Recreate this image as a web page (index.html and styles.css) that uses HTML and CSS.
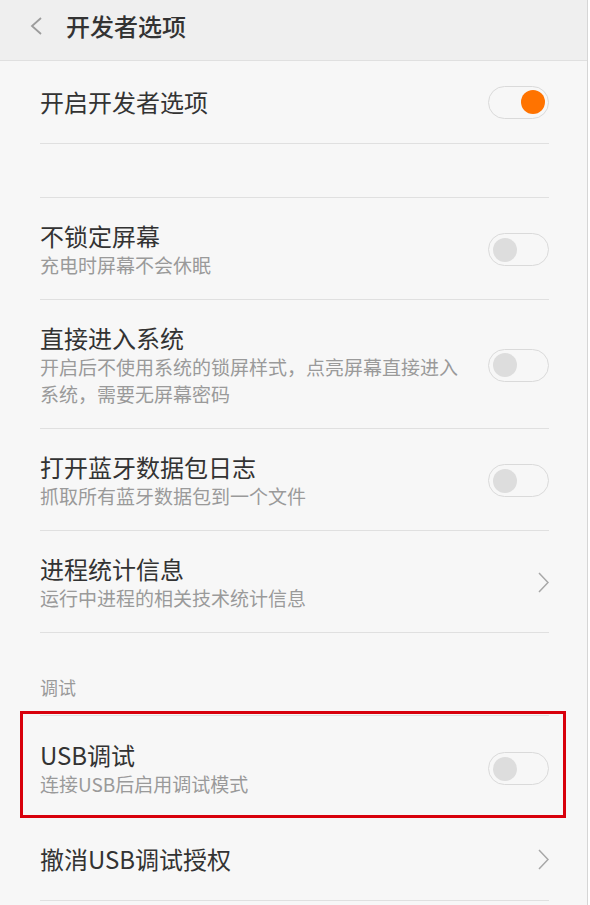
FILE: index.html
```html
<!DOCTYPE html>
<html lang="zh-CN">
<head>
    <meta charset="UTF-8">
    <meta name="viewport" content="width=device-width, initial-scale=1.0">
    <title>开发者选项</title>
    <link rel="stylesheet" href="styles.css">
</head>
<body>
    <div class="screen">
        <header class="topbar">
            <span class="back">
                <svg width="14" height="20" viewBox="0 0 14 20"><polyline points="12,2 3,10 12,18" fill="none" stroke="#9c9c9c" stroke-width="1.8"/></svg>
            </span>
            <h1>开发者选项</h1>
        </header>

        <div class="list">
            <div class="item single">
                <div class="text"><div class="title">开启开发者选项</div></div>
                <span class="switch on"><span class="knob"></span></span>
            </div>

            <div class="spacer"></div>

            <div class="item">
                <div class="text">
                    <div class="title">不锁定屏幕</div>
                    <div class="sub">充电时屏幕不会休眠</div>
                </div>
                <span class="switch"><span class="knob"></span></span>
            </div>

            <div class="item">
                <div class="text">
                    <div class="title">直接进入系统</div>
                    <div class="sub">开启后不使用系统的锁屏样式，点亮屏幕直接进入系统，需要无屏幕密码</div>
                </div>
                <span class="switch"><span class="knob"></span></span>
            </div>

            <div class="item">
                <div class="text">
                    <div class="title">打开蓝牙数据包日志</div>
                    <div class="sub">抓取所有蓝牙数据包到一个文件</div>
                </div>
                <span class="switch"><span class="knob"></span></span>
            </div>

            <div class="item">
                <div class="text">
                    <div class="title">进程统计信息</div>
                    <div class="sub">运行中进程的相关技术统计信息</div>
                </div>
                <span class="arrow">
                    <svg width="11" height="21" viewBox="0 0 11 21"><polyline points="1,1 10,10.5 1,20" fill="none" stroke="#a8a8a8" stroke-width="1.5"/></svg>
                </span>
            </div>

            <div class="group-label">调试</div>

            <div class="item marked">
                <div class="text">
                    <div class="title">USB调试</div>
                    <div class="sub">连接USB后启用调试模式</div>
                </div>
                <span class="switch"><span class="knob"></span></span>
            </div>

            <div class="item single">
                <div class="text"><div class="title">撤消USB调试授权</div></div>
                <span class="arrow">
                    <svg width="11" height="21" viewBox="0 0 11 21"><polyline points="1,1 10,10.5 1,20" fill="none" stroke="#a8a8a8" stroke-width="1.5"/></svg>
                </span>
            </div>
        </div>
    </div>
</body>
</html>
```

FILE: styles.css
```css
* {
    box-sizing: border-box;
}

body {
    margin: 0;
    background: #ffffff;
    font-family: "Noto Sans CJK SC", "Noto Sans", sans-serif;
    color: #333333;
}

.screen {
    width: 588px;
    min-height: 905px;
    background: #f7f7f7;
    border-right: 1px solid #d6d6d6;
}

/* Top bar */
.topbar {
    height: 61px;
    display: flex;
    align-items: center;
    padding: 0 0 8px 29px;
    background: #efefef;
    border-bottom: 1px solid #e0e0e0;
}

.back {
    display: flex;
    width: 14px;
    margin-right: 23px;
}

.topbar h1 {
    margin: 0;
    font-size: 24px;
    font-weight: 500;
    line-height: 30px;
    color: #333333;
}

/* List */
.item {
    position: relative;
    display: flex;
    align-items: center;
    gap: 18px;
    margin: 0 38px 0 40px;
    padding: 23px 0 21px;
    border-bottom: 1px solid #e0e0e0;
}

.item.single {
    min-height: 83px;
    padding: 0;
}

.item .text {
    flex: 1;
    min-width: 0;
}

.title {
    font-size: 24px;
    line-height: 30px;
    color: #333333;
}

.sub {
    font-size: 19px;
    line-height: 27px;
    color: #9a9a9a;
}

.spacer {
    height: 54px;
    margin: 0 38px 0 40px;
    border-bottom: 1px solid #e0e0e0;
}

.group-label {
    margin: 0 38px 0 40px;
    padding: 41px 0 14px;
    font-size: 18px;
    line-height: 27px;
    color: #9a9a9a;
    border-bottom: 1px solid #e0e0e0;
}

.item.marked {
    padding: 24px 0 20px;
}

.item.marked::after {
    content: '';
    position: absolute;
    top: -5px;
    left: -20px;
    right: -17px;
    bottom: -1px;
    border: 3px solid #d8000c;
}

/* Switch */
.switch {
    flex: none;
    display: flex;
    align-items: center;
    width: 61px;
    height: 33px;
    padding: 0 3.5px;
    border: 1.5px solid #dadada;
    border-radius: 17px;
}

.switch .knob {
    width: 24px;
    height: 24px;
    border-radius: 50%;
    background: #dddddd;
}

.switch.on {
    justify-content: flex-end;
}

.switch.on .knob {
    background: #ff7300;
}

.arrow {
    flex: none;
    display: flex;
}
```
